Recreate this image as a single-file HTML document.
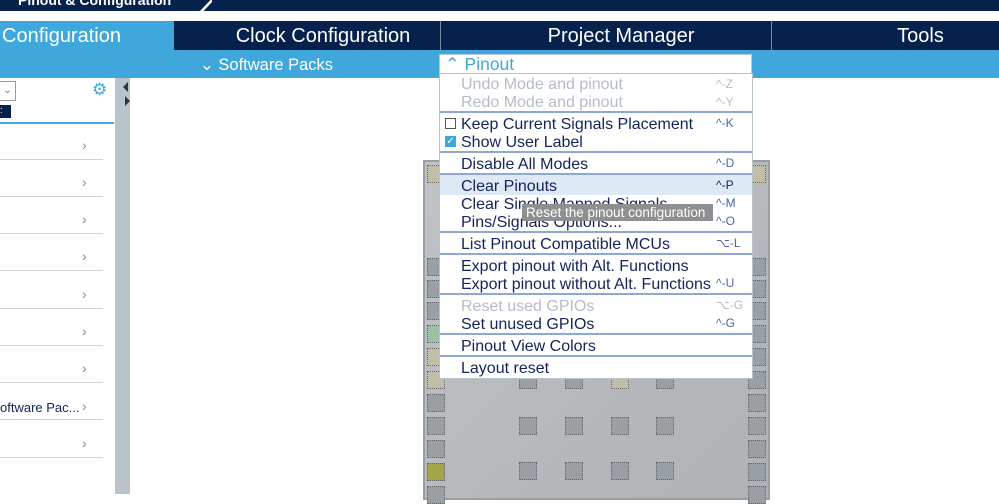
<!DOCTYPE html>
<html><head><style>
*{margin:0;padding:0;box-sizing:border-box}
body{width:999px;height:494px;overflow:hidden;background:#fff;font-family:"Liberation Sans","DejaVu Sans",sans-serif;position:relative}
.a{position:absolute}
.nav{color:#fff;font-size:20px;text-align:center;line-height:30px}
.mi{position:absolute;left:461px;font-size:16px;color:#13245a;line-height:18px;white-space:nowrap}
.sc{position:absolute;left:716px;font-size:12px;color:#4a66a8;line-height:18px}
.dis{color:#b6bcc6}
.sep{position:absolute;left:440px;width:312px;height:2px;background:#8fa7d6}
.row{position:absolute;left:0;width:103px;height:1px;background:#cdd3d9}
.chev{position:absolute;left:82px;color:#888;font-size:14px}
.pin{position:absolute;width:18px;height:18px;background:#9a9fa4;border:1px dotted #666;font-size:4px;color:#333;text-align:center;line-height:18px}
</style></head><body>
<div class="a" style="left:0;top:0;width:999px;height:11px;background:#05214c"></div>
<div class="a" style="left:18px;top:-8px;color:#fff;font-size:14px;font-weight:bold">Pinout &amp; Configuration</div>
<div class="a" style="left:172px;top:0;width:40px;height:11px;background:#05214c;clip-path:polygon(0 0,100% 0,90% 100%,0 100%)"></div>
<div class="a" style="left:200px;top:0;width:14px;height:11px;background:#fff;clip-path:polygon(75% 0,100% 0,25% 100%,0 100%)"></div>
<div class="a" style="left:212px;top:0;width:787px;height:11px;background:#05214c"></div>
<div class="a" style="left:0;top:11px;width:999px;height:10px;background:#fff"></div>
<div class="a nav" style="left:0;top:21px;width:173px;height:29px;background:#3fa7db;text-align:left;padding-left:2px">Configuration</div>
<div class="a nav" style="left:173px;top:21px;width:267px;height:29px;background:#05214c;border-left:1px solid #7a8aa0;padding-left:32px">Clock Configuration</div>
<div class="a nav" style="left:440px;top:21px;width:331px;height:29px;background:#05214c;border-left:1px solid #7a8aa0;padding-left:30px">Project Manager</div>
<div class="a nav" style="left:771px;top:21px;width:228px;height:29px;background:#05214c;border-left:1px solid #7a8aa0;padding-left:70px">Tools</div>
<div class="a" style="left:0;top:50px;width:999px;height:28px;background:#3fa7db"></div>
<div class="a" style="left:200px;top:55px;color:#fff;font-size:16.5px">⌄ Software Packs</div>
<!-- left panel -->
<div class="a" style="left:0;top:81px;width:16px;height:20px;border:1px solid #999;border-left:none;font-size:10px;color:#777;text-align:center;line-height:18px">⌄</div>
<div class="a" style="left:92px;top:80px;color:#3fa7db;font-size:17px">⚙</div>
<div class="a" style="left:0;top:105px;width:11px;height:13px;background:#05214c;color:#fff;font-size:9px">:</div>
<div class="a" style="left:0;top:122px;width:114px;height:2px;background:#3fa7db"></div>
<div class="a" style="left:115px;top:78px;width:15px;height:416px;background:#b9c3ca"></div>
<div class="a" style="left:123px;top:82px;width:0;height:0;border:5px solid transparent;border-right-color:#333;border-left:none"></div>
<div class="a" style="left:125px;top:96px;width:0;height:0;border:5px solid transparent;border-left-color:#333;border-right:none"></div>
<div class="row" style="top:159px"></div><div class="row" style="top:196px"></div><div class="row" style="top:233px"></div><div class="row" style="top:270px"></div><div class="row" style="top:308px"></div><div class="row" style="top:345px"></div><div class="row" style="top:382px"></div><div class="row" style="top:419px"></div><div class="row" style="top:457px"></div>
<div class="chev" style="top:137px">›</div><div class="chev" style="top:174px">›</div><div class="chev" style="top:211px">›</div><div class="chev" style="top:248px">›</div><div class="chev" style="top:286px">›</div><div class="chev" style="top:323px">›</div><div class="chev" style="top:360px">›</div><div class="chev" style="top:398px">›</div><div class="chev" style="top:435px">›</div>
<div class="a" style="left:0;top:400px;font-size:13px;color:#13245a">oftware Pac...</div>
<!-- chip -->
<div class="a" style="left:423px;top:160px;width:347px;height:340px;background:linear-gradient(135deg,#bfc3c6,#aeb2b5);border:2px solid #9a9ea1"></div>
<div class="pin" style="left:427px;top:165px;background:#c0bea6"></div><div class="pin" style="left:748px;top:165px;background:#c0bea6"></div>
<div class="pin" style="left:427px;top:258px"></div><div class="pin" style="left:427px;top:280px"></div><div class="pin" style="left:427px;top:302px"></div>
<div class="pin" style="left:427px;top:325px;background:#9cc0a6"></div><div class="pin" style="left:427px;top:348px;background:#c0bea6"></div><div class="pin" style="left:427px;top:371px;background:#c0bea6"></div>
<div class="pin" style="left:427px;top:394px"></div><div class="pin" style="left:427px;top:417px"></div><div class="pin" style="left:427px;top:440px"></div><div class="pin" style="left:427px;top:463px;background:#a3a64a"></div><div class="pin" style="left:427px;top:486px"></div>
<div class="pin" style="left:748px;top:258px"></div><div class="pin" style="left:748px;top:280px"></div><div class="pin" style="left:748px;top:302px"></div><div class="pin" style="left:748px;top:325px"></div><div class="pin" style="left:748px;top:348px"></div><div class="pin" style="left:748px;top:371px"></div><div class="pin" style="left:748px;top:394px"></div><div class="pin" style="left:748px;top:417px"></div><div class="pin" style="left:748px;top:440px"></div><div class="pin" style="left:748px;top:463px"></div><div class="pin" style="left:748px;top:486px"></div>
<div class="pin" style="left:519px;top:371px"></div><div class="pin" style="left:565px;top:371px"></div><div class="pin" style="left:611px;top:371px;background:#c0bea6"></div><div class="pin" style="left:656px;top:371px"></div>
<div class="pin" style="left:519px;top:417px"></div><div class="pin" style="left:565px;top:417px"></div><div class="pin" style="left:611px;top:417px"></div><div class="pin" style="left:656px;top:417px"></div>
<div class="pin" style="left:519px;top:462px"></div><div class="pin" style="left:565px;top:462px"></div><div class="pin" style="left:611px;top:462px"></div><div class="pin" style="left:656px;top:462px"></div>
<!-- menu -->
<div class="a" style="left:439px;top:54px;width:313px;height:20px;background:#fff;border:1px solid #b9c7d6"></div>
<div class="a" style="left:445px;top:54px;color:#3fa7db;font-size:17.5px">⌃ Pinout</div>
<div class="a" style="left:439px;top:73px;width:314px;height:306px;background:#fff;border:1px solid #b9c3ca"></div>
<div class="a" style="left:440px;top:175px;width:312px;height:20px;background:#dde9f5"></div>
<div class="mi dis" style="top:76px">Undo Mode and pinout</div><div class="sc dis" style="top:75px">^-Z</div>
<div class="mi dis" style="top:94px">Redo Mode and pinout</div><div class="sc dis" style="top:93px">^-Y</div>
<div class="sep" style="top:111px"></div>
<div class="a" style="left:445px;top:118px;width:11px;height:11px;border:1px solid #555;background:#fff"></div>
<div class="mi" style="top:116px">Keep Current Signals Placement</div><div class="sc" style="top:114px">^-K</div>
<div class="a" style="left:445px;top:136px;width:11px;height:11px;background:#3fa7db;color:#fff;font-size:10px;line-height:11px;text-align:center">✓</div>
<div class="mi" style="top:134px">Show User Label</div>
<div class="sep" style="top:151px"></div>
<div class="mi" style="top:156px">Disable All Modes</div><div class="sc" style="top:154px">^-D</div>
<div class="sep" style="top:173px"></div>
<div class="mi" style="top:178px">Clear Pinouts</div><div class="sc" style="top:176px;color:#13245a">^-P</div>
<div class="mi" style="top:196px">Clear Single Mapped Signals</div><div class="sc" style="top:194px">^-M</div>
<div class="mi" style="top:214px">Pins/Signals Options...</div><div class="sc" style="top:212px">^-O</div>
<div class="a" style="left:522px;top:204px;width:191px;height:17px;background:#8d8f91;color:#fff;font-size:13.5px;line-height:17px;padding-left:4px;white-space:nowrap">Reset the pinout configuration</div>
<div class="sep" style="top:231px"></div>
<div class="mi" style="top:236px">List Pinout Compatible MCUs</div><div class="sc" style="top:234px">⌥-L</div>
<div class="sep" style="top:253px"></div>
<div class="mi" style="top:258px">Export pinout with Alt. Functions</div>
<div class="mi" style="top:276px">Export pinout without Alt. Functions</div><div class="sc" style="top:274px">^-U</div>
<div class="sep" style="top:293px"></div>
<div class="mi dis" style="top:298px">Reset used GPIOs</div><div class="sc dis" style="top:296px">⌥-G</div>
<div class="mi" style="top:316px">Set unused GPIOs</div><div class="sc" style="top:314px">^-G</div>
<div class="sep" style="top:333px"></div>
<div class="mi" style="top:338px">Pinout View Colors</div>
<div class="sep" style="top:355px"></div>
<div class="mi" style="top:360px">Layout reset</div>
</body></html>
